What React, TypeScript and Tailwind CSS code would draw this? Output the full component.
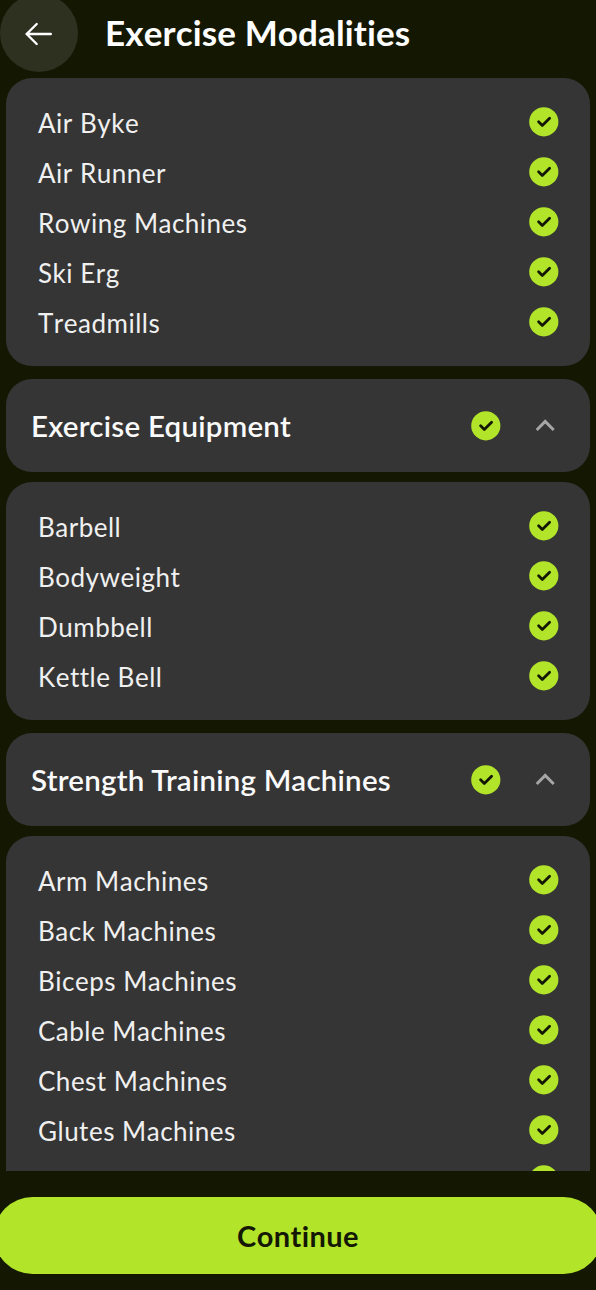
import React from "react";

function CheckBadge() {
  return (
    <svg className="size-[30px] shrink-0" viewBox="0 0 30 30" fill="none">
      <circle cx="14.8" cy="14.8" r="14.6" fill="#b2e52a" />
      <path d="M9.6 14.8 L13.3 18.5 L20.6 11.3" stroke="#141803" strokeWidth="2.8" strokeLinecap="round" strokeLinejoin="round" />
    </svg>
  );
}

function ItemCard({ items, continues = false }: { items: string[]; continues?: boolean }) {
  return (
    <ul className="shrink-0 rounded-[26px] bg-[#353535] py-[19px] pr-[31px] pl-8">
      {items.map((item) => (
        <li key={item} className="flex h-[50px] items-center justify-between">
          <span className="pt-[2px] text-[26px] leading-8 tracking-[0.5px] text-[#f0f0f0]">{item}</span>
          <CheckBadge />
        </li>
      ))}
      {continues && (
        <li className="flex h-[50px] items-center justify-end">
          <CheckBadge />
        </li>
      )}
    </ul>
  );
}

function SectionHeader({ title }: { title: string }) {
  return (
    <div className="mt-[13px] mb-[10px] flex h-[93px] shrink-0 items-center rounded-[26px] bg-[#353535] pr-[35px] pl-[25px]">
      <h2 className="flex-1 pt-[1px] text-[29.5px] leading-9 font-semibold tracking-[0.24px] whitespace-nowrap text-[#fafafa] [font-kerning:normal]">{title}</h2>
      <CheckBadge />
      <svg className="ml-[34px] h-5 w-5" viewBox="0 0 20 20" fill="none">
        <path d="M1.7 14 L10.2 5.4 L18.7 14" stroke="#a6a6a6" strokeWidth="2.9" />
      </svg>
    </div>
  );
}

const cardio = ["Air Byke", "Air Runner", "Rowing Machines", "Ski Erg", "Treadmills"];
const equipment = ["Barbell", "Bodyweight", "Dumbbell", "Kettle Bell"];
const strength = [
  "Arm Machines",
  "Back Machines",
  "Biceps Machines",
  "Cable Machines",
  "Chest Machines",
  "Glutes Machines",
];

export default function App() {
  return (
    <div className="flex h-[1290px] w-[596px] flex-col overflow-hidden bg-[#141803] font-['Lato',sans-serif] [font-kerning:none] [font-variant-ligatures:none]">
      <header className="flex h-[78px] shrink-0 items-start">
        <button aria-label="Back" className="-mt-[6px] flex size-[78px] items-center justify-center rounded-full bg-[#2e3020]">
          <svg className="size-[30px]" viewBox="0 0 30 30" fill="none" stroke="#ffffff" strokeWidth="2.4" strokeLinecap="round" strokeLinejoin="round">
            <path d="M26.8 16 H2.6 M12.7 6 L2.6 16 L12.7 26" />
          </svg>
        </button>
        <h1 className="ml-[27px] pt-[12px] text-[35px] leading-10 font-bold tracking-[0.13px] whitespace-nowrap text-white">Exercise Modalities</h1>
      </header>
      <main className="flex h-[1093px] shrink-0 flex-col overflow-hidden pr-[6px] pl-[6px]">
        <ItemCard items={cardio} />
        <SectionHeader title="Exercise Equipment" />
        <ItemCard items={equipment} />
        <SectionHeader title="Strength Training Machines" />
        <ItemCard items={strength} continues />
      </main>
      <footer className="-mx-[6px] mt-[26px] flex shrink-0">
        <button className="h-[77px] flex-1 rounded-full bg-[#b2e52a] text-[29px] font-bold tracking-[0.4px] text-[#141803]">Continue</button>
      </footer>
    </div>
  );
}
